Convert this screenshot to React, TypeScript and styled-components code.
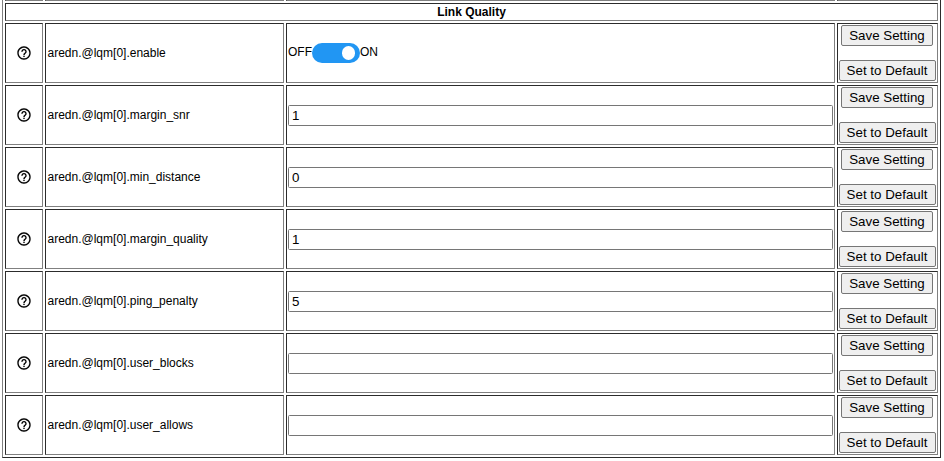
import React from "react";
import styled, { createGlobalStyle } from "styled-components";

const GlobalStyle = createGlobalStyle`
  body { margin: 0; background: #fff; overflow: hidden; }
  *, *::before { box-sizing: border-box; }
`;

const Frame = styled.main`
  width: 939px;
  height: 458px;
  margin-left: 2px;
  padding: 0 2px 2px;
  border: 1px outset gray;
  border-top: 0;
  display: flex;
  flex-direction: column;
  gap: 2px;
  font: 12px/14px "Liberation Sans", Arial, sans-serif;
  color: #000;
`;

const Row = styled.div<{ $height: number }>`
  display: grid;
  grid-template-columns: 38px 239px 549px 101px;
  column-gap: 2px;
  height: ${(p) => p.$height}px;
  flex: none;
`;

const Cell = styled.div<{ $center?: boolean }>`
  border: 1px inset gray;
  padding: 1px;
  display: flex;
  align-items: center;
  justify-content: ${(p) => (p.$center ? "center" : "flex-start")};
  min-width: 0;
`;

const ClippedCell = styled.div`
  border-bottom: 1px solid gray;
  border-left: 1px solid #2c2c2c;
  border-right: 1px solid gray;
`;

const Heading = styled.div`
  flex: none;
  height: 18px;
  border: 1px inset gray;
  text-align: center;
  font-weight: bold;
  line-height: 16px;
`;

const Name = styled.span`
  padding-left: 0.5px;
`;

const HelpIcon = styled.svg`
  width: 16px;
  height: 16px;
  display: block;
`;

const Input = styled.input`
  width: 545px;
  height: 21px;
  margin: 0;
  padding: 1px 3px;
  border: 1px solid #767676;
  border-radius: 1.5px;
  background: #fff;
  color: #000;
  font: 13.333px "Liberation Sans", Arial, sans-serif;
  outline: none;
`;

const ToggleGroup = styled.div`
  display: flex;
  align-items: center;
`;

const ToggleLabel = styled.span`
  margin-top: -2px;
`;

const Switch = styled.button`
  width: 48px;
  height: 20px;
  padding: 0 4.7px 0 0;
  border: 0;
  border-radius: 10px;
  background: #2196f3;
  display: flex;
  align-items: center;
  justify-content: flex-end;
`;

const Knob = styled.span`
  width: 13.5px;
  height: 13.5px;
  border-radius: 50%;
  background: #fff;
`;

const Actions = styled(Cell)`
  flex-direction: column;
  justify-content: flex-start;
  gap: 14px;
`;

const Button = styled.button<{ $width: number }>`
  width: ${(p) => p.$width}px;
  height: 21px;
  flex: none;
  margin-right: 1px;
  padding: 0;
  border: 1px solid #767676;
  border-radius: 2px;
  background: #efefef;
  color: #000;
  font: 13.333px/19px "Liberation Sans", Arial, sans-serif;
  white-space: nowrap;
`;

type Setting = { name: string; value?: string; toggle?: boolean };

const settings: Setting[] = [
  { name: "enable", toggle: true },
  { name: "margin_snr", value: "1" },
  { name: "min_distance", value: "0" },
  { name: "margin_quality", value: "1" },
  { name: "ping_penalty", value: "5" },
  { name: "user_blocks", value: "" },
  { name: "user_allows", value: "" },
];

function Help() {
  return (
    <HelpIcon viewBox="0 0 24 24" fill="#000" stroke="#000" strokeWidth="0.12" aria-label="Help">
      <path d="M11 18h2v-2h-2v2zm1-16C6.48 2 2 6.48 2 12s4.48 10 10 10 10-4.48 10-10S17.52 2 12 2zm0 18c-4.41 0-8-3.59-8-8s3.59-8 8-8 8 3.59 8 8-3.59 8-8 8zm0-14c-2.21 0-4 1.79-4 4h2c0-1.1.9-2 2-2s2 .9 2 2c0 2-3 1.75-3 5h2c0-2.25 3-2.5 3-5 0-2.21-1.79-4-4-4z" />
    </HelpIcon>
  );
}

function Toggle() {
  return (
    <ToggleGroup>
      <ToggleLabel>OFF</ToggleLabel>
      <Switch role="switch" aria-checked="true"><Knob /></Switch>
      <ToggleLabel>ON</ToggleLabel>
    </ToggleGroup>
  );
}

export default function App() {
  return (
    <>
      <GlobalStyle />
      <Frame>
        <Row $height={1}>
          <ClippedCell /><ClippedCell /><ClippedCell /><ClippedCell />
        </Row>
        <Heading>Link Quality</Heading>
        {settings.map((s) => (
          <Row $height={60} key={s.name}>
            <Cell $center><Help /></Cell>
            <Cell><Name>{`aredn.@lqm[0].${s.name}`}</Name></Cell>
            <Cell>{s.toggle ? <Toggle /> : <Input defaultValue={s.value} />}</Cell>
            <Actions>
              <Button $width={92}>Save Setting</Button>
              <Button $width={97}>Set to Default</Button>
            </Actions>
          </Row>
        ))}
      </Frame>
    </>
  );
}
